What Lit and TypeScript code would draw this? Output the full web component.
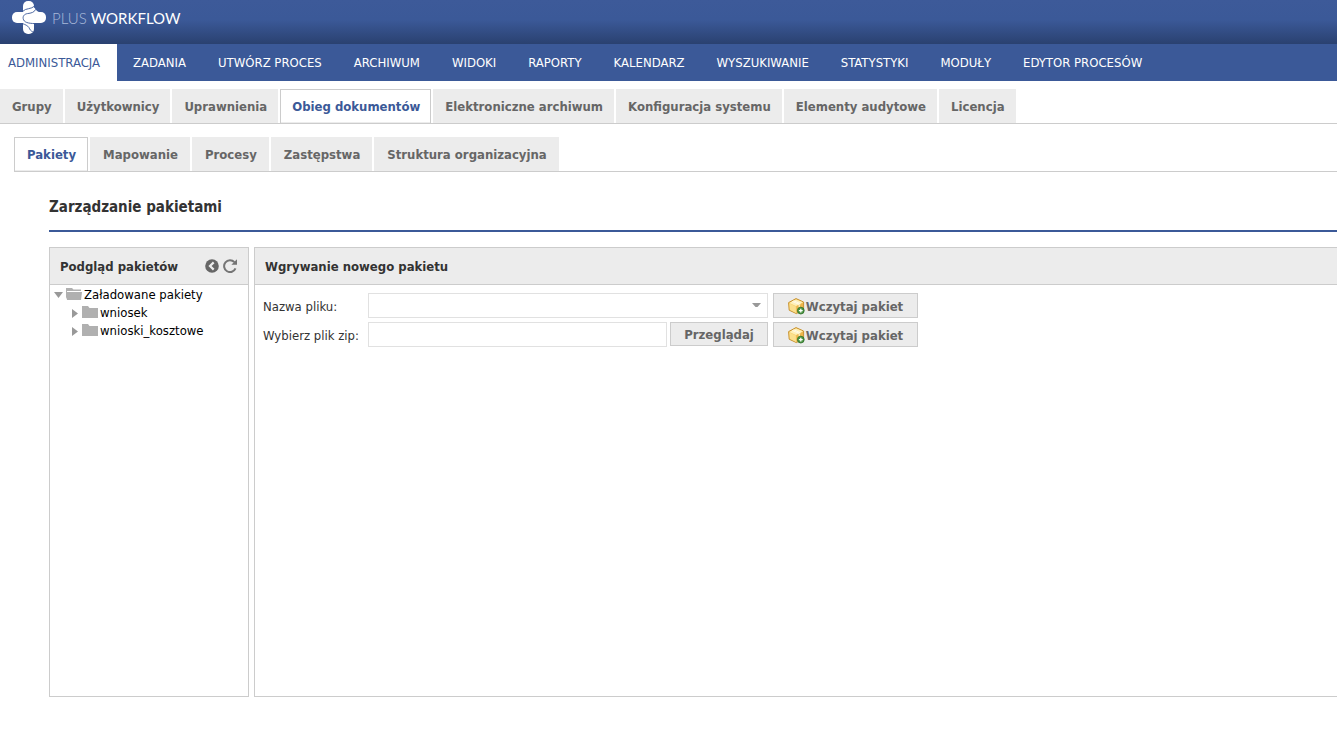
import { LitElement, html, css, svg } from "lit";
import { customElement, property, state } from "lit/decorators.js";
import { classMap } from "lit/directives/class-map.js";

const MENU = [
  "ADMINISTRACJA", "ZADANIA", "UTWÓRZ PROCES", "ARCHIWUM", "WIDOKI", "RAPORTY",
  "KALENDARZ", "WYSZUKIWANIE", "STATYSTYKI", "MODUŁY", "EDYTOR PROCESÓW",
];
const SECTIONS = [
  "Grupy", "Użytkownicy", "Uprawnienia", "Obieg dokumentów", "Elektroniczne archiwum",
  "Konfiguracja systemu", "Elementy audytowe", "Licencja",
];
const SUBSECTIONS = ["Pakiety", "Mapowanie", "Procesy", "Zastępstwa", "Struktura organizacyjna"];
const PACKAGES = ["wniosek", "wnioski_kosztowe"];

const logoMark = svg`
  <rect x="11" y="1" width="11" height="33" rx="5"/>
  <rect x="0" y="12" width="34" height="11" rx="5"/>
  <path d="M16 12.4C19.5 12 21.5 10 22.3 7.5C24 10 25.4 11.9 28 12.2L28 17L16 17Z"/>
  <g fill="none" stroke="#3b5998" stroke-width=".9">
    <path d="M11 11.2C13.4 8 19.6 9.4 22.6 6"/>
    <path d="M23.6 9.4C22.4 12.4 19 13.2 15.4 13.6C11.8 14.2 10.8 16.6 11.2 18.6C11.8 22.4 16 23.4 23 23.6"/>
    <path d="M10.6 23.6C13 24.6 15.6 25.4 17 27.6C17.8 29.4 18.6 31 20.8 31.8"/>
  </g>`;

const boxIcon = html`<svg width="17" height="17" viewBox="0 0 17 17" aria-hidden="true">
  <path d="M.6 4.6L8 .6L15.6 4L15.6 11.6L8.4 15.6L1.2 12.2Z" fill="#f7d271" stroke="#c6902f" stroke-width="1"/>
  <path d="M1.4 4.9L8 1.4L14.8 4.2L8 8Z" fill="#fff0b8"/>
  <path d="M1.5 5.4L7.7 8.4L8 14.9L1.9 11.8Z" fill="#fbe08d"/>
  <path d="M8.3 8.3L15 4.8L15 11.3L8.4 14.9Z" fill="#edb64b"/>
  <path d="M4.2 3.4L11.2 6.4L11.2 9.4M5.6 2.7L12.4 5.8" fill="none" stroke="#fffbe8" stroke-width="1"/>
  <circle cx="12.8" cy="12.6" r="3.4" fill="#4b9541" stroke="#2d6f29" stroke-width=".8"/>
  <path d="M12.8 10.7V14.5M10.9 12.6H14.7" stroke="#fff" stroke-width="1.3"/>
</svg>`;

const closedFolder = html`<svg width="16" height="14" viewBox="0 0 16 14" aria-hidden="true">
  <path d="M0 0H6L7.5 2H16V12H0Z" fill="#b0b0b0"/>
</svg>`;

const openFolder = html`<svg width="16" height="14" viewBox="0 0 16 14" aria-hidden="true">
  <path d="M0 0H6L7.5 1.5H15V3H1V9L0 11Z" fill="#b0b0b0"/>
  <path d="M0 4H16L15 12H1Z" fill="#b0b0b0"/>
</svg>`;

const linkStyles = css`
  a { text-decoration: none; white-space: nowrap; }
  ul { list-style: none; margin: 0; padding: 0; }
`;

@customElement("main-header")
class MainHeader extends LitElement {
  static styles = [linkStyles, css`
    :host { display: block; }
    .brand {
      display: flex; align-items: center; gap: 6px; height: 44px; box-sizing: border-box;
      padding: 0 12px 9px; color: #fff;
      background: linear-gradient(#3d5a99 0%, #3b5998 45%, #2a4170 100%);
    }
    .mark { fill: #fff; }
    .name { display: flex; gap: 4px; font: 300 15px/18px Lato, sans-serif; }
    .plus { color: #a9b9d9; }
    .work { font-weight: 400; }
    .menu { display: flex; background: #3b5998; height: 37px; }
    .menu a { display: block; padding: 0 16px; line-height: 37px; color: #fff; }
    .menu .active { background: #fff; color: #3b5998; padding: 0 17px 0 8px; }
  `];

  render() {
    return html`
      <header class="brand">
        <svg class="mark" width="34" height="35" viewBox="0 0 34 35" role="img" aria-label="Logo">${logoMark}</svg>
        <div class="name"><span class="plus">PLUS</span><span class="work">WORKFLOW</span></div>
      </header>
      <nav><ul class="menu">
        ${MENU.map((label, i) => html`<li><a href="#" class=${classMap({ active: i === 0 })}>${label}</a></li>`)}
      </ul></nav>`;
  }
}

@customElement("tab-strip")
class TabStrip extends LitElement {
  @property({ attribute: false }) items: string[] = [];
  @property() selected = "";

  static styles = [linkStyles, css`
    :host { display: block; border-bottom: 1px solid #ccc; }
    .tabs { display: flex; gap: 2px; }
    a {
      display: block; box-sizing: border-box; height: 34px; padding: var(--tab-padding, 0 11px 0 12px);
      border: 1px solid #ececec; border-bottom-width: 0;
      line-height: 34px; background: #ececec; color: #666; font-weight: bold;
    }
    .active { background: #fff; color: #3b5998; border-color: #ccc; box-shadow: inset 0 -1px #ececec; }
  `];

  render() {
    return html`<nav><ul class="tabs">
      ${this.items.map((item) => html`<li>
        <a href="#" class=${classMap({ active: item === this.selected })}
          @click=${(e: Event) => { e.preventDefault(); this.selected = item; }}>${item}</a>
      </li>`)}
    </ul></nav>`;
  }
}

@customElement("app-root")
class AppRoot extends LitElement {
  @state() private expanded = true;

  static styles = css`
    :host {
      display: flex; flex-direction: column; box-sizing: border-box; min-height: 100vh;
      overflow: hidden; background: #fff; color: #333;
      font: 13px/18px "DejaVu Sans Condensed", Tahoma, sans-serif;
    }
    .sections { margin-top: 8px; --tab-padding: 0 10px 0 11px; }
    .subsections { margin: 13px 0 0 14px; }
    main { flex: 1; display: flex; flex-direction: column; padding: 0 0 52px 49px; }
    h1 {
      margin: 0 0 15px; padding: 26px 0 14px; border-bottom: 2px solid #3b5998;
      font-size: 15px; line-height: 18px;
    }
    .panels { flex: 1; display: flex; gap: 5px; }
    .panel { border: 1px solid #ccc; box-sizing: border-box; }
    .tree-panel { width: 200px; }
    .form-panel { flex: 1; border-right: 0; }
    .panel-head {
      display: flex; align-items: center; gap: 4px; height: 36px; padding: 0 11px 0 10px;
      background: #ececec; border-bottom: 1px solid #ccc;
    }
    h2 { flex: 1; margin: 0; font-size: 13px; line-height: 18px; padding-top: 2px; }
    button { font: inherit; cursor: pointer; }
    .tool { display: flex; border: 0; padding: 0; background: none; }
    ul { list-style: none; margin: 0; padding: 0; color: #000; }
    .tree { padding: 1px 4px; }
    .tree ul { padding-left: 16px; }
    .node {
      display: flex; align-items: center; gap: 2px; height: 18px; padding: 0;
      border: 0; background: none; color: #000;
    }
    .arrow { width: 10px; height: 10px; fill: #999; }
    .form {
      display: grid; grid-template-columns: 100px 400px 145px; grid-auto-rows: 25px; gap: 4px 5px;
      align-items: start; padding: 8px;
    }
    label { line-height: 27px; white-space: nowrap; }
    .combo { display: grid; align-items: center; justify-items: end; }
    .combo > * { grid-area: 1 / 1; }
    .combo svg { margin-right: 7px; pointer-events: none; }
    select, input {
      box-sizing: border-box; width: 100%; height: 25px; margin: 0; padding: 0 6px; min-width: 0;
      border: 1px solid #e1e1e1; border-radius: 0; background: #fff;
      font: inherit; color: inherit; appearance: none;
    }
    .file { display: flex; align-items: start; gap: 3px; }
    .btn {
      display: flex; align-items: center; justify-content: center; gap: 1px;
      box-sizing: border-box; height: 25px; padding: 2px 0 0; border: 1px solid #ccc;
      background: #ececec; color: #666; font-weight: bold; white-space: nowrap;
    }
    .browse { height: 24px; flex: 0 0 98px; }
  `;

  render() {
    return html`
      <main-header></main-header>
      <tab-strip class="sections" .items=${SECTIONS} selected="Obieg dokumentów"></tab-strip>
      <tab-strip class="subsections" .items=${SUBSECTIONS} selected="Pakiety"></tab-strip>
      <main>
        <h1>Zarządzanie pakietami</h1>
        <div class="panels">
          <section class="panel tree-panel">
            <div class="panel-head">
              <h2>Podgląd pakietów</h2>
              <button class="tool" aria-label="Zwiń">
                <svg width="14" height="14" viewBox="0 0 14 14"><circle cx="7" cy="7" r="6.8" fill="#666"/>
                  <path d="M8.7 3.4L5 7L8.7 10.6" fill="none" stroke="#ececec" stroke-width="2.2"/></svg>
              </button>
              <button class="tool" aria-label="Odśwież">
                <svg width="14" height="14" viewBox="0 0 14 14">
                  <path d="M11.4 3.2A5.9 5.9 0 1 0 12.5 9.4" fill="none" stroke="#757575" stroke-width="2"/>
                  <path d="M14 .2V5.8H8.4Z" fill="#757575"/></svg>
              </button>
            </div>
            <ul class="tree">
              <li>
                <button class="node" aria-expanded=${this.expanded} @click=${() => { this.expanded = !this.expanded; }}>
                  <svg class="arrow" viewBox="0 0 10 10"><path d="M0 2H9L4.5 8Z"/></svg>${openFolder}<span>Załadowane pakiety</span>
                </button>
                ${this.expanded ? html`<ul>${PACKAGES.map((name) => html`<li>
                  <button class="node">
                    <svg class="arrow" viewBox="0 0 10 10"><path d="M2 1L8 5.5L2 10Z"/></svg>${closedFolder}<span>${name}</span>
                  </button></li>`)}</ul>` : null}
              </li>
            </ul>
          </section>
          <section class="panel form-panel">
            <div class="panel-head"><h2>Wgrywanie nowego pakietu</h2></div>
            <form class="form" @submit=${(e: Event) => e.preventDefault()}>
              <label for="name">Nazwa pliku:</label>
              <div class="combo">
                <select id="name"><option></option></select>
                <svg width="9" height="5" viewBox="0 0 9 5" aria-hidden="true"><path d="M0 0H9L5.5 4H3.5Z" fill="#999"/></svg>
              </div>
              <button class="btn">${boxIcon}<span>Wczytaj pakiet</span></button>
              <label for="zip">Wybierz plik zip:</label>
              <div class="file">
                <input id="zip" type="text" readonly>
                <button class="btn browse" type="button">Przeglądaj</button>
              </div>
              <button class="btn">${boxIcon}<span>Wczytaj pakiet</span></button>
            </form>
          </section>
        </div>
      </main>`;
  }
}
